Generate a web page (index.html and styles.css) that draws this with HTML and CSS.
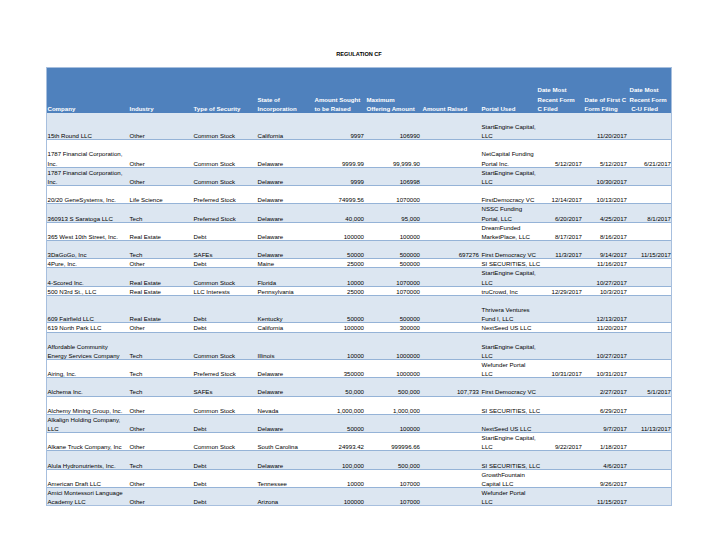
FILE: index.html
```html
<!DOCTYPE html>
<html>
<head>
<meta charset="utf-8">
<link rel="stylesheet" href="styles.css">
</head>
<body>
<div class="sheet">
  <div class="title">REGULATION CF</div>
  <table class="grid">
    <colgroup>
      <col class="c-company"><col class="c-industry"><col class="c-type"><col class="c-state">
      <col class="c-sought"><col class="c-max"><col class="c-raised"><col class="c-portal">
      <col class="c-datec"><col class="c-first"><col class="c-cu">
    </colgroup>
    <thead>
      <tr class="head">
        <th>Company</th><th>Industry</th><th>Type of Security</th><th>State of<br>Incorporation</th>
        <th>Amount Sought<br>to be Raised</th><th>Maximum<br>Offering Amount</th><th>Amount Raised</th>
        <th>Portal Used</th><th>Date Most<br>Recent Form<br>C Filed</th><th>Date of First C<br>Form Filing</th>
        <th>Date Most<br>Recent Form<br>&nbsp;C-U Filed</th>
      </tr>
    </thead>
    <tbody>
      <tr class="h3 band"><td>15th Round LLC</td><td>Other</td><td>Common Stock</td><td>California</td><td class="n">9997</td><td class="n">106990</td><td class="n"></td><td>StartEngine Capital,<br>LLC</td><td class="n"></td><td class="n">11/20/2017</td><td class="n"></td></tr>
      <tr class="h3"><td>1787 Financial Corporation,<br>Inc.</td><td>Other</td><td>Common Stock</td><td>Delaware</td><td class="n">9999.99</td><td class="n">99,999.90</td><td class="n"></td><td>NetCapital Funding<br>Portal Inc.</td><td class="n">5/12/2017</td><td class="n">5/12/2017</td><td class="n">6/21/2017</td></tr>
      <tr class="h2 band"><td>1787 Financial Corporation,<br>Inc.</td><td>Other</td><td>Common Stock</td><td>Delaware</td><td class="n">9999</td><td class="n">106998</td><td class="n"></td><td>StartEngine Capital,<br>LLC</td><td class="n"></td><td class="n">10/30/2017</td><td class="n"></td></tr>
      <tr class="h2"><td>20/20 GeneSystems, Inc.</td><td>Life Science</td><td>Preferred Stock</td><td>Delaware</td><td class="n">74999.56</td><td class="n">1070000</td><td class="n"></td><td>FirstDemocracy VC</td><td class="n">12/14/2017</td><td class="n">10/13/2017</td><td class="n"></td></tr>
      <tr class="h2 band"><td>360913 S Saratoga LLC</td><td>Tech</td><td>Preferred Stock</td><td>Delaware</td><td class="n">40,000</td><td class="n">95,000</td><td class="n"></td><td>NSSC Funding<br>Portal, LLC</td><td class="n">6/20/2017</td><td class="n">4/25/2017</td><td class="n">8/1/2017</td></tr>
      <tr class="h2"><td>365 West 10th Street, Inc.</td><td>Real Estate</td><td>Debt</td><td>Delaware</td><td class="n">100000</td><td class="n">100000</td><td class="n"></td><td>DreamFunded<br>MarketPlace, LLC</td><td class="n">8/17/2017</td><td class="n">8/16/2017</td><td class="n"></td></tr>
      <tr class="h2 band"><td>3DaGoGo, Inc</td><td>Tech</td><td>SAFEs</td><td>Delaware</td><td class="n">50000</td><td class="n">500000</td><td class="n">697276</td><td>First Democracy VC</td><td class="n">11/3/2017</td><td class="n">9/14/2017</td><td class="n">11/15/2017</td></tr>
      <tr class="h1"><td>4Pure, Inc.</td><td>Other</td><td>Debt</td><td>Maine</td><td class="n">25000</td><td class="n">500000</td><td class="n"></td><td>SI SECURITIES, LLC</td><td class="n"></td><td class="n">11/16/2017</td><td class="n"></td></tr>
      <tr class="h2 band"><td>4-Scored Inc.</td><td>Real Estate</td><td>Common Stock</td><td>Florida</td><td class="n">10000</td><td class="n">1070000</td><td class="n"></td><td>StartEngine Capital,<br>LLC</td><td class="n"></td><td class="n">10/27/2017</td><td class="n"></td></tr>
      <tr class="h1"><td>500 N3rd St., LLC</td><td>Real Estate</td><td>LLC Interests</td><td>Pennsylvania</td><td class="n">25000</td><td class="n">1070000</td><td class="n"></td><td>truCrowd, Inc</td><td class="n">12/29/2017</td><td class="n">10/3/2017</td><td class="n"></td></tr>
      <tr class="h3 band"><td>609 Fairfield LLC</td><td>Real Estate</td><td>Debt</td><td>Kentucky</td><td class="n">50000</td><td class="n">500000</td><td class="n"></td><td>Thrivera Ventures<br>Fund I, LLC</td><td class="n"></td><td class="n">12/13/2017</td><td class="n"></td></tr>
      <tr class="h1"><td>619 North Park LLC</td><td>Other</td><td>Debt</td><td>California</td><td class="n">100000</td><td class="n">300000</td><td class="n"></td><td>NextSeed US LLC</td><td class="n"></td><td class="n">11/20/2017</td><td class="n"></td></tr>
      <tr class="h3 band"><td>Affordable Community<br>Energy Services Company</td><td>Tech</td><td>Common Stock</td><td>Illinois</td><td class="n">10000</td><td class="n">1000000</td><td class="n"></td><td>StartEngine Capital,<br>LLC</td><td class="n"></td><td class="n">10/27/2017</td><td class="n"></td></tr>
      <tr class="h2"><td>Airing, Inc.</td><td>Tech</td><td>Preferred Stock</td><td>Delaware</td><td class="n">350000</td><td class="n">1000000</td><td class="n"></td><td>Wefunder Portal<br>LLC</td><td class="n">10/31/2017</td><td class="n">10/31/2017</td><td class="n"></td></tr>
      <tr class="h2 band"><td>Alchema Inc.</td><td>Tech</td><td>SAFEs</td><td>Delaware</td><td class="n">50,000</td><td class="n">500,000</td><td class="n">107,733</td><td>First Democracy VC</td><td class="n"></td><td class="n">2/27/2017</td><td class="n">5/1/2017</td></tr>
      <tr class="h2"><td>Alchemy Mining Group, Inc.</td><td>Other</td><td>Common Stock</td><td>Nevada</td><td class="n">1,000,000</td><td class="n">1,000,000</td><td class="n"></td><td>SI SECURITIES, LLC</td><td class="n"></td><td class="n">6/29/2017</td><td class="n"></td></tr>
      <tr class="h2 band"><td>Alkalign Holding Company,<br>LLC</td><td>Other</td><td>Debt</td><td>Delaware</td><td class="n">50000</td><td class="n">100000</td><td class="n"></td><td>NextSeed US LLC</td><td class="n"></td><td class="n">9/7/2017</td><td class="n">11/13/2017</td></tr>
      <tr class="h2"><td>Alkane Truck Company, Inc</td><td>Other</td><td>Common Stock</td><td>South Carolina</td><td class="n">24993.42</td><td class="n">999996.66</td><td class="n"></td><td>StartEngine Capital,<br>LLC</td><td class="n">9/22/2017</td><td class="n">1/18/2017</td><td class="n"></td></tr>
      <tr class="h2 band"><td>Alula Hydronutrients, Inc.</td><td>Tech</td><td>Debt</td><td>Delaware</td><td class="n">100,000</td><td class="n">500,000</td><td class="n"></td><td>SI SECURITIES, LLC</td><td class="n"></td><td class="n">4/6/2017</td><td class="n"></td></tr>
      <tr class="h2"><td>American Draft LLC</td><td>Other</td><td>Debt</td><td>Tennessee</td><td class="n">10000</td><td class="n">107000</td><td class="n"></td><td>GrowthFountain<br>Capital LLC</td><td class="n"></td><td class="n">9/26/2017</td><td class="n"></td></tr>
      <tr class="h2 band"><td>Amici Montessori Language<br>Academy LLC</td><td>Other</td><td>Debt</td><td>Arizona</td><td class="n">100000</td><td class="n">107000</td><td class="n"></td><td>Wefunder Portal<br>LLC</td><td class="n"></td><td class="n">11/15/2017</td><td class="n"></td></tr>
    </tbody>
  </table>
</div>
</body>
</html>
```
FILE: styles.css
```css
html, body {
  margin: 0;
  padding: 0;
  background: #ffffff;
}
.sheet {
  padding: 50px 0 0 46px;
  width: 626px;
  font-family: "Liberation Sans", Arial, sans-serif;
  font-size: 6.1px;
  color: #000;
}
.title {
  text-align: center;
  font-weight: bold;
  font-size: 5.6px;
  line-height: 9.15px;
  height: 9.15px;
  margin-bottom: 8px;
}
.grid {
  width: 626px;
  table-layout: fixed;
  border-collapse: separate;
  border-spacing: 0;
  outline: 1px solid #a7bfde;
  outline-offset: -1px;
}
.c-company { width: 82px; }
.c-industry { width: 64px; }
.c-type { width: 64px; }
.c-state { width: 57px; }
.c-sought { width: 52px; }
.c-max { width: 56px; }
.c-raised { width: 59px; }
.c-portal { width: 56px; }
.c-datec { width: 47px; }
.c-first { width: 45px; }
.c-cu { width: 44px; }
.grid th, .grid td {
  padding: 0 1px 0 1.5px;
  line-height: 9.15px;
  vertical-align: bottom;
  white-space: nowrap;
  text-align: left;
  overflow: visible;
}
.head th {
  background: #4f81bd;
  color: #ffffff;
  font-weight: bold;
  height: 45.75px;
}
.grid td {
  box-shadow: inset 0 -1px 0 #95b3d7;
}
.grid td.n {
  text-align: right;
}
.band td {
  background-color: #dce6f1;
}
.h1 td { height: 9.15px; }
.h2 td { height: 18.3px; }
.h3 td { height: 27.45px; }
```
